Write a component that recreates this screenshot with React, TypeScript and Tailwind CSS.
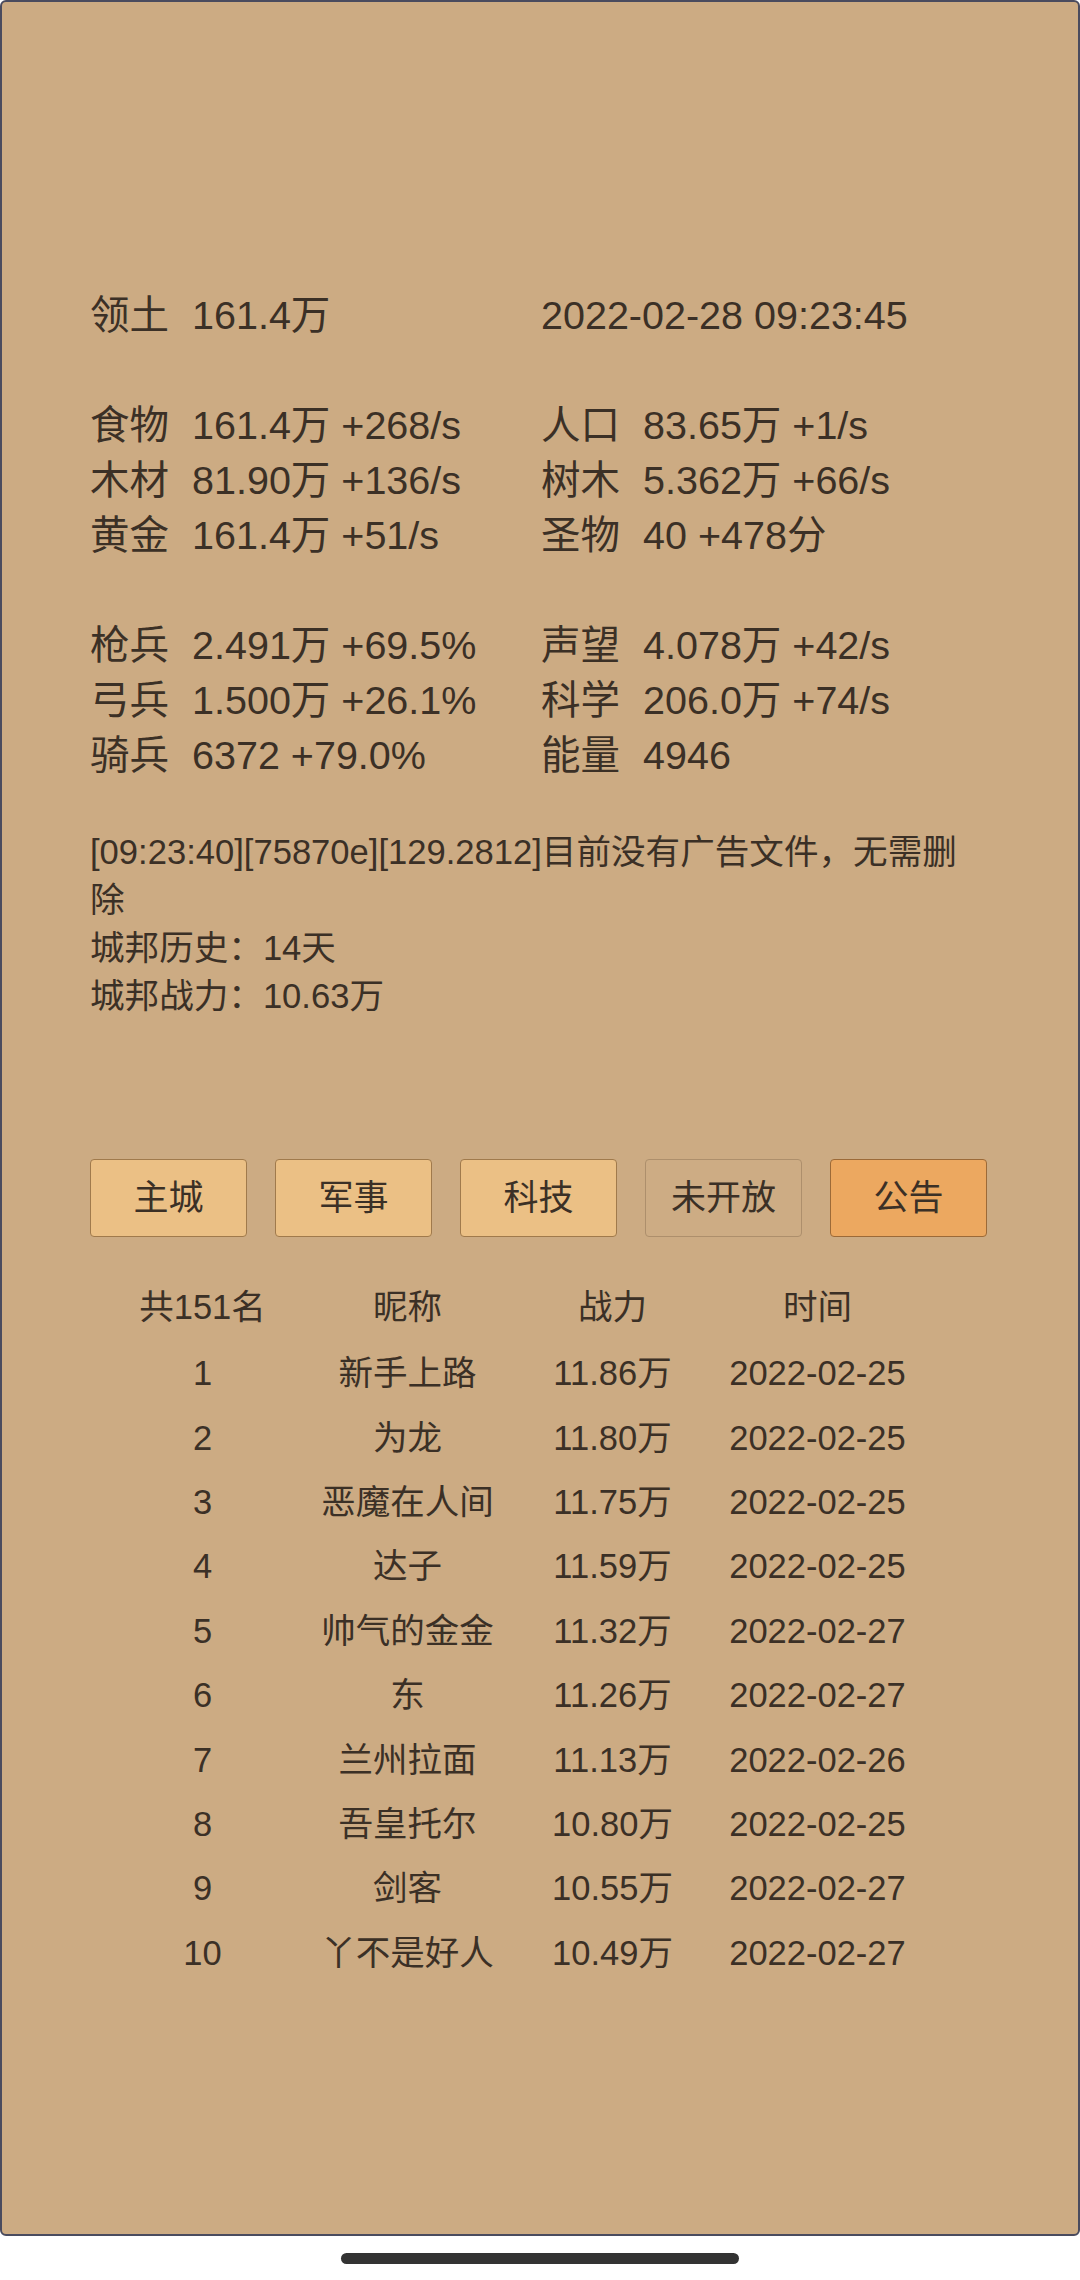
import React from "react"

const font = { fontFamily: "'Liberation Sans', 'Noto Sans CJK SC', sans-serif" }

const blockA = [
  ["食物", "161.4万 +268/s", "人口", "83.65万 +1/s"],
  ["木材", "81.90万 +136/s", "树木", "5.362万 +66/s"],
  ["黄金", "161.4万 +51/s", "圣物", "40 +478分"],
]

const blockB = [
  ["枪兵", "2.491万 +69.5%", "声望", "4.078万 +42/s"],
  ["弓兵", "1.500万 +26.1%", "科学", "206.0万 +74/s"],
  ["骑兵", "6372 +79.0%", "能量", "4946"],
]

const tabs = [
  { name: "主城", cls: "bg-[#ebc085] border-[#a07a4c]" },
  { name: "军事", cls: "bg-[#ebc085] border-[#a07a4c]" },
  { name: "科技", cls: "bg-[#ebc085] border-[#a07a4c]" },
  { name: "未开放", cls: "bg-[#cdac84] border-[#ad8f6c]" },
  { name: "公告", cls: "bg-[#eca860] border-[#9c6a38]" },
]

const ranks = [
  ["1", "新手上路", "11.86万", "2022-02-25"],
  ["2", "为龙", "11.80万", "2022-02-25"],
  ["3", "恶魔在人间", "11.75万", "2022-02-25"],
  ["4", "达子", "11.59万", "2022-02-25"],
  ["5", "帅气的金金", "11.32万", "2022-02-27"],
  ["6", "东", "11.26万", "2022-02-27"],
  ["7", "兰州拉面", "11.13万", "2022-02-26"],
  ["8", "吾皇托尔", "10.80万", "2022-02-25"],
  ["9", "剑客", "10.55万", "2022-02-27"],
  ["10", "丫不是好人", "10.49万", "2022-02-27"],
]

function Cell({ label, value }: { label: string; value: string }) {
  return (
    <div className="flex whitespace-nowrap">
      <span className="w-[102px] shrink-0">{label}</span>
      <span>{value}</span>
    </div>
  )
}

function StatBlock({ rows }: { rows: string[][] }) {
  return (
    <div className="grid grid-cols-[451px_451px]">
      {rows.map((r) => (
        <React.Fragment key={r[0]}>
          <Cell label={r[0]} value={r[1]} />
          <Cell label={r[2]} value={r[3]} />
        </React.Fragment>
      ))}
    </div>
  )
}

export default function App() {
  return (
    <div className="w-[1080px] h-[2280px] bg-white text-[#3b3026]" style={font}>
      <div className="box-border h-[2236px] w-[1080px] rounded-[6px] border-2 border-[#4a4b5e] bg-[#ccab83] pl-[88px] pr-[90px] pt-[286px]">
        {/* 资源 */}
        <div className="text-[39.5px] leading-[55px]">
          <div className="grid grid-cols-[451px_451px]">
            <Cell label="领土" value="161.4万" />
            <div>2022-02-28 09:23:45</div>
          </div>
          <div className="h-[55px]" />
          <StatBlock rows={blockA} />
          <div className="h-[55px]" />
          <StatBlock rows={blockB} />
        </div>

        {/* 日志 */}
        <div className="mt-[45px] text-[34.6px] leading-[48px]">
          <div>[09:23:40][75870e][129.2812]目前没有广告文件，无需删除</div>
          <div>城邦历史：14天</div>
          <div>城邦战力：10.63万</div>
        </div>

        {/* 标签 */}
        <div className="mt-[139px] flex gap-[28px]">
          {tabs.map((t) => (
            <div
              key={t.name}
              className={
                "flex h-[78px] w-[157px] items-center justify-center rounded-[4px] border text-[35px] " +
                t.cls
              }
            >
              {t.name}
            </div>
          ))}
        </div>

        {/* 排行 */}
        <div className="mt-[37px] pl-[10px] text-[34.5px]">
          <div className="grid h-[68px] grid-cols-[205px_205px_205px_205px] items-center text-center">
            <div>共151名</div>
            <div>昵称</div>
            <div>战力</div>
            <div>时间</div>
          </div>
          {ranks.map((r) => (
            <div
              key={r[0]}
              className="grid h-[64.4px] grid-cols-[205px_205px_205px_205px] items-center text-center"
            >
              <div>{r[0]}</div>
              <div>{r[1]}</div>
              <div>{r[2]}</div>
              <div>{r[3]}</div>
            </div>
          ))}
        </div>
      </div>
      <div className="flex h-[44px] items-center justify-center">
        <div className="h-[11px] w-[398px] rounded-full bg-[#333333]" />
      </div>
    </div>
  )
}
